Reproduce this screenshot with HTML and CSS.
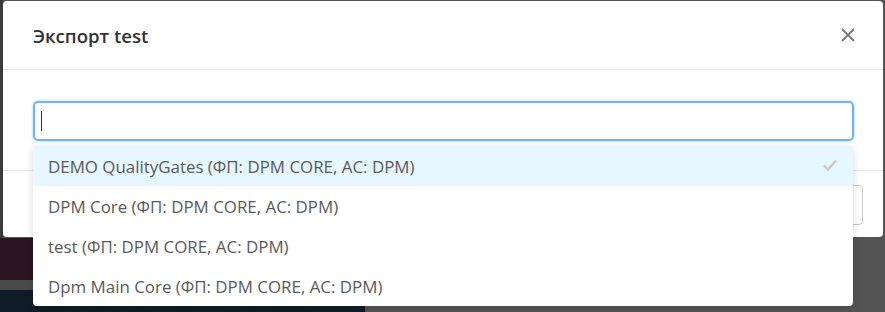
FILE: index.html
```html
<!DOCTYPE html>
<html lang="ru">

<head>
    <meta charset="UTF-8">
    <meta name="viewport" content="width=device-width, initial-scale=1.0">
    <title>Экспорт test</title>
    <link rel="stylesheet" href="styles.css">
</head>

<body>
    <div class="page">
        <div class="page-top">
            <div class="side-strip"></div>
            <div class="page-fill"></div>
        </div>
        <div class="page-bottom">
            <div class="app-panel">
                <div class="panel-purple"></div>
                <div class="panel-gray"></div>
                <div class="panel-navy"></div>
            </div>
            <div class="page-fill"></div>
        </div>
    </div>

    <div class="modal">
        <div class="modal-header">
            <h4 class="modal-title">Экспорт test</h4>
            <button class="close-btn" aria-label="Закрыть">
                <svg width="14" height="14" viewBox="0 0 14 14">
                    <path d="M1 1 L13 13 M13 1 L1 13" stroke="#7a7a7a" stroke-width="1.8" fill="none" />
                </svg>
            </button>
        </div>
        <div class="modal-body">
            <div class="select-input"><span class="caret"></span></div>
        </div>
        <div class="modal-footer">
            <button class="footer-btn">Отмена</button>
        </div>
    </div>

    <ul class="dropdown">
        <li class="option selected">
            <span>DEMO QualityGates (ФП: DPM CORE, AC: DPM)</span>
            <svg class="check" width="14" height="12" viewBox="0 0 14 12">
                <path d="M1 6.5 L5 10.5 L13 1.5" stroke="#c8c8c8" stroke-width="2.4" fill="none" />
            </svg>
        </li>
        <li class="option"><span>DPM Core (ФП: DPM CORE, AC: DPM)</span></li>
        <li class="option"><span>test (ФП: DPM CORE, AC: DPM)</span></li>
        <li class="option"><span>Dpm Main Core (ФП: DPM CORE, AC: DPM)</span></li>
    </ul>
</body>

</html>
```

FILE: styles.css
```css
body {
    margin: 0;
    font-family: "Open Sans", Arial, sans-serif;
    background: #545454;
    overflow: hidden;
}

.page {
    height: 312px;
    display: flex;
    flex-direction: column;
}

.page-top {
    display: flex;
    height: 238px;
}

.side-strip {
    width: 3px;
    background: #3b3b3b;
}

.page-fill {
    flex: 1;
    background: #545454;
}

.page-bottom {
    display: flex;
    flex: 1;
}

.app-panel {
    width: 365px;
    display: flex;
    flex-direction: column;
}

.panel-purple {
    height: 42px;
    background: #2a1520;
}

.panel-gray {
    height: 10px;
    background: #4a4a4a;
}

.panel-navy {
    flex: 1;
    background: #0f1c27;
}

.modal {
    position: absolute;
    top: 1px;
    left: 3px;
    width: 880px;
    height: 236px;
    background: #fff;
    border-radius: 4px;
    display: flex;
    flex-direction: column;
}

.modal-header {
    height: 68px;
    border-bottom: 1px solid #e5e5e5;
    display: flex;
    align-items: center;
    justify-content: space-between;
    padding: 0 28px 0 30px;
}

.modal-title {
    margin: 0;
    font-size: 18.6px;
    font-weight: 600;
    color: #333;
}

.close-btn {
    background: none;
    border: 0;
    padding: 0;
    display: flex;
}

.modal-body {
    padding: 31px 29px 0 30px;
    height: 69px;
    border-bottom: 1px solid #e5e5e5;
}

.select-input {
    height: 36px;
    border: 2px solid #6fb3f4;
    border-radius: 5px;
    box-shadow: 0 0 3px rgba(102, 175, 233, .6);
    display: flex;
    align-items: center;
    padding-left: 6px;
}

.caret {
    width: 1px;
    height: 20px;
    background: #333;
}

.modal-footer {
    flex: 1;
    display: flex;
    justify-content: flex-end;
    align-items: flex-start;
    padding: 14px 20px 0 0;
}

.footer-btn {
    height: 40px;
    padding: 0 16px;
    border: 1px solid #ccc;
    border-radius: 4px;
    background: #fff;
    font-family: inherit;
    font-size: 15px;
    color: #333;
}

.dropdown {
    position: absolute;
    top: 146px;
    left: 33px;
    width: 820px;
    margin: 0;
    padding: 0;
    list-style: none;
    background: #fff;
    border-radius: 4px;
    box-shadow: 0 2px 8px rgba(0, 0, 0, .15);
    overflow: hidden;
}

.option {
    height: 40px;
    display: flex;
    align-items: center;
    justify-content: space-between;
    padding: 0 16px 0 15px;
    font-size: 16.9px;
    color: #5a5a5a;
}

.option.selected {
    background: #e6f7ff;
}

.check {
    margin-top: -3px;
}
```
